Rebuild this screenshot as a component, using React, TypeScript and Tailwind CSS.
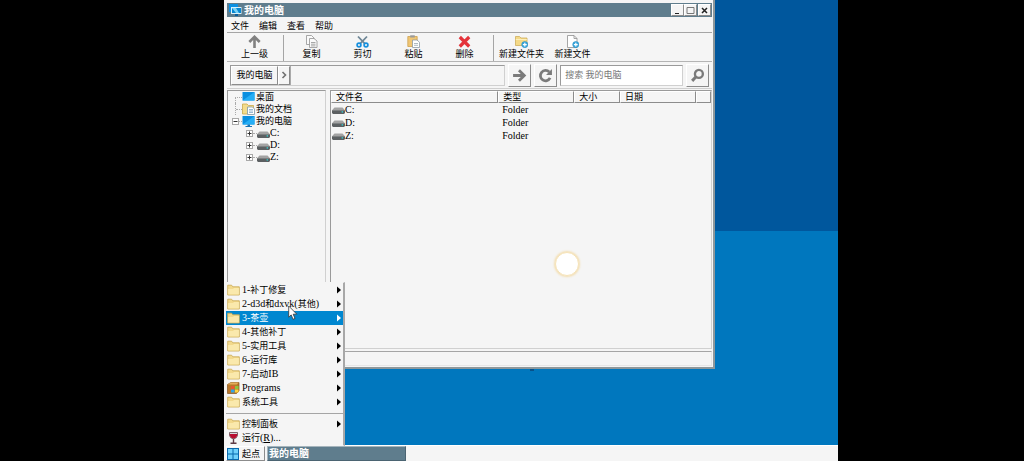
import { Fragment, type ReactNode } from "react";

const raised = "border border-t-white border-l-white border-r-[#8c8c8c] border-b-[#8c8c8c] bg-[#f5f5f5]";
const sunken = "border border-t-[#9a9a9a] border-l-[#9a9a9a] border-r-[#d0d0d0] border-b-[#d0d0d0]";

function Label({ text }: { text: string }) {
  const parts = text.split(/([\x20-\x7e]+)/).filter(Boolean);
  return (
    <span className="whitespace-pre">
      {parts.map((part, i) =>
        /^[\x20-\x7e]/.test(part) ? (
          <span key={i} className="text-[10px]">
            {part}
          </span>
        ) : (
          <Fragment key={i}>{part}</Fragment>
        ),
      )}
    </span>
  );
}

function MonitorIcon({ stand = false }: { stand?: boolean }) {
  return (
    <svg viewBox="0 0 13 12" className="h-3 w-[13px] shrink-0" aria-hidden="true">
      <path d="M0.5 1H12.5V9.5H0.5Z" fill="#0a8fe0" />
      <path d="M0.5 9.5L12.5 1V9.5Z" fill="#25aef5" />
      {stand && <path d="M5.5 9.5H8V11H10V12H3.5V11H5.5Z" fill="#1674b5" />}
    </svg>
  );
}

function DocsIcon() {
  return (
    <svg viewBox="0 0 13 12" className="h-3 w-[13px] shrink-0" aria-hidden="true">
      <path d="M0.5 1H5L6.5 2.5H11.5V11H0.5Z" fill="#f3dc8c" stroke="#c9a84c" strokeWidth="0.8" />
      <path d="M5.5 4H10.5L12.5 6V11.5H5.5Z" fill="#fff" stroke="#7f98a8" strokeWidth="0.8" />
      <path d="M7 6.5H11M7 8H11M7 9.5H11" stroke="#6d9cc0" strokeWidth="0.7" />
    </svg>
  );
}

function DriveIcon() {
  return (
    <svg viewBox="0 0 13 9" className="h-[9px] w-[13px] shrink-0" aria-hidden="true">
      <path d="M2.5 2.5H10.5L13 5.2H0Z" fill="#a3a3a3" />
      <path d="M0 5.2H13V8L12 9H1L0 8Z" fill="#5c6062" />
      <circle cx="10.3" cy="6.9" r="0.8" fill="#35c6c9" />
    </svg>
  );
}

function FolderIcon() {
  return (
    <svg viewBox="0 0 13 12" className="h-3 w-[13px] shrink-0" aria-hidden="true">
      <path d="M0.7 11V1.2H4.6L5.8 2.8H12.3V11Z" fill="#f2d98c" stroke="#c9a850" strokeWidth="0.8" />
      <path d="M1.1 5H6L7 4H11.9V10.6H1.1Z" fill="#fae9ac" />
    </svg>
  );
}

function ProgramsIcon() {
  return (
    <svg viewBox="0 0 13 12" className="h-3 w-[13px] shrink-0" aria-hidden="true">
      <path d="M0.5 2.5L4 0.5H12V9L9.5 11.5H0.5Z" fill="#b9772b" stroke="#80501f" strokeWidth="0.7" />
      <path d="M0.5 2.5L4 0.5H12L9.5 2.5Z" fill="#e3ad5b" />
      <path d="M4 4H7.5V7H4Z" fill="#e75835" />
      <path d="M8 4H11.5V7H8Z" fill="#8bc53f" />
      <path d="M4 7.5H7.5V10.5H4Z" fill="#2fa4e7" />
      <path d="M8 7.5H11.5V10.5H8Z" fill="#ffd23e" />
    </svg>
  );
}

function WineIcon() {
  return (
    <svg viewBox="0 0 13 12" className="h-3 w-[13px] shrink-0" aria-hidden="true">
      <path d="M2.5 0.5H10.5V3.5Q10 6.5 6.5 6.8Q3 6.5 2.5 3.5Z" fill="#d4dade" stroke="#65464d" strokeWidth="0.8" />
      <path d="M2.8 2H10.2V3.8Q9 6.4 6.5 6.6Q4 6.4 2.8 3.8Z" fill="#b80f31" />
      <path d="M6.5 6.8V10.5M3.5 11.2H9.5" stroke="#5e3943" strokeWidth="1.4" />
    </svg>
  );
}

function PlusBadge() {
  return (
    <>
      <circle cx="9.8" cy="9.6" r="3.1" fill="#3ba7dd" stroke="#2187bd" strokeWidth="0.5" />
      <path d="M9.8 7.7V11.5M7.9 9.6H11.7" stroke="#fff" strokeWidth="1.2" />
    </>
  );
}

const toolIcons: Record<string, ReactNode> = {
  up: <path d="M6.5 13V3M1.3 7L6.5 1.8L11.7 7" fill="none" stroke="#808080" strokeWidth="2.6" />,
  copy: (
    <g fill="#fafafa" stroke="#929292" strokeWidth="0.8">
      <path d="M1.5 0.5H6.5L9 3V9.5H1.5Z" />
      <path d="M4.5 3.5H9L12 6V12.5H4.5Z" />
      <path d="M6 7.5H10.5M6 9.2H10.5M6 10.9H10.5" />
    </g>
  ),
  cut: (
    <g fill="none">
      <path d="M2 1.5L9.3 9.2M11 1.5L3.7 9.2" stroke="#6f8796" strokeWidth="1.8" />
      <circle cx="3" cy="10" r="1.9" stroke="#168fdd" strokeWidth="1.7" />
      <circle cx="10" cy="10" r="1.9" stroke="#168fdd" strokeWidth="1.7" />
    </g>
  ),
  paste: (
    <g>
      <path d="M0.8 1.5H10.2V11.5H0.8Z" fill="#f0c673" stroke="#c99a44" strokeWidth="0.7" />
      <path d="M3.2 0.3H7.8V2.5H3.2Z" fill="#9a9a9a" />
      <path d="M5.5 5H10L12.5 7.3V12.5H5.5Z" fill="#fff" stroke="#8e9ba4" strokeWidth="0.8" />
      <path d="M7 8.5H11M7 10.3H11" stroke="#9aa8b0" strokeWidth="0.8" />
    </g>
  ),
  remove: <path d="M1.8 2L11.2 11.5M11.2 2L1.8 11.5" stroke="#e4333a" strokeWidth="3.2" />,
  newFolder: (
    <g>
      <path d="M0.5 1.5H4.5L6 3H12V10.5H0.5Z" fill="#f4d987" stroke="#c9a64f" strokeWidth="0.7" />
      <path d="M0.8 4.5H11.8" stroke="#fdf0bf" strokeWidth="0.9" />
      <PlusBadge />
    </g>
  ),
  newFile: (
    <g>
      <path d="M1.5 0.5H8L11 3.5V12.5H1.5Z" fill="#fff" stroke="#909090" strokeWidth="0.8" />
      <path d="M8 0.5V3.5H11" fill="none" stroke="#909090" strokeWidth="0.8" />
      <PlusBadge />
    </g>
  ),
};

function ToolButton({ icon, label }: { icon: string; label: string }) {
  return (
    <button type="button" className="flex w-[51px] flex-col items-center whitespace-nowrap">
      <svg viewBox="0 0 13 13" className="size-[13px]" aria-hidden="true">
        {toolIcons[icon]}
      </svg>
      <span className="leading-[13px]">{label}</span>
    </button>
  );
}

function Divider() {
  return <div className="ml-[3px] mr-[2px] w-px self-stretch bg-[#a5a5a5]" />;
}

function Expander({ open = false }: { open?: boolean }) {
  return (
    <button
      type="button"
      aria-label={open ? "折叠" : "展开"}
      className="grid size-[7px] shrink-0 place-items-center border border-[#a8a8a8] bg-white"
    >
      <svg viewBox="0 0 5 5" className="size-[5px]" aria-hidden="true">
        <path d="M0.5 2H4.5V3H0.5Z" fill="#333" />
        {!open && <path d="M2 0.5H3V4.5H2Z" fill="#333" />}
      </svg>
    </button>
  );
}

const drives = ["C:", "D:", "Z:"];

function Tree() {
  return (
    <nav aria-label="文件夹" className={`w-[99px] shrink-0 bg-[#f5f5f5] ${sunken}`}>
      <ul className="pl-1">
        <li className="flex h-3 items-center">
          <span className="ml-[3px] mt-[6px] h-[6px] w-[7px] border-l border-t border-dotted border-[#aaa]" />
          <MonitorIcon />
          <span className="pl-px">桌面</span>
        </li>
        <li className="flex h-3 items-center">
          <span className="ml-[3px] flex h-3 w-[7px] items-center border-l border-dotted border-[#aaa]">
            <span className="w-full border-t border-dotted border-[#aaa]" />
          </span>
          <DocsIcon />
          <span className="pl-px">我的文档</span>
        </li>
        <li>
          <div className="flex h-3 items-center">
            <Expander open />
            <span className="w-[3px] border-t border-dotted border-[#aaa]" />
            <MonitorIcon stand />
            <span className="pl-px">我的电脑</span>
          </div>
          <ul className="pl-[14px]">
            {drives.map((d) => (
              <li key={d} className="flex h-3 items-center">
                <Expander />
                <span className="w-1 border-t border-dotted border-[#aaa]" />
                <DriveIcon />
                <Label text={d} />
              </li>
            ))}
          </ul>
        </li>
      </ul>
    </nav>
  );
}

function FileList() {
  const th = `h-3 px-1 text-left font-normal leading-[10px] ${raised}`;
  return (
    <section className={`min-w-0 flex-1 bg-[#f5f5f5] ${sunken}`}>
      <table className="w-full table-fixed border-separate border-spacing-0">
        <thead>
          <tr>
            <th className={`w-[44%] ${th}`}>文件名</th>
            <th className={`w-[20%] ${th}`}>类型</th>
            <th className={`w-[12%] ${th}`}>大小</th>
            <th className={`w-[20%] ${th}`}>日期</th>
            <td className={th} />
          </tr>
        </thead>
        <tbody>
          {drives.map((d) => (
            <tr key={d} className="h-[13px]">
              <td className="p-0">
                <span className="flex h-[13px] items-center pl-px">
                  <DriveIcon />
                  <Label text={d} />
                </span>
              </td>
              <td className="px-1 py-0 text-[10px] leading-[13px]">Folder</td>
              <td />
              <td />
              <td />
            </tr>
          ))}
        </tbody>
      </table>
    </section>
  );
}

function CaptionButton({ label, children }: { label: string; children: ReactNode }) {
  return (
    <button type="button" aria-label={label} className={`grid h-3 w-[13px] place-items-center ${raised}`}>
      <svg viewBox="0 0 9 9" className="size-[9px]" fill="none" aria-hidden="true">
        {children}
      </svg>
    </button>
  );
}

function IconButton({ label, children }: { label: string; children: ReactNode }) {
  return (
    <button type="button" aria-label={label} className={`grid size-[23px] shrink-0 place-items-center ${raised}`}>
      <svg viewBox="0 0 14 14" className="size-[15px]" fill="none" stroke="#7b7b7b" strokeWidth="2.6" aria-hidden="true">
        {children}
      </svg>
    </button>
  );
}

function ExplorerWindow() {
  return (
    <main className="absolute left-0 top-0 flex h-4/5 w-4/5 flex-col border-b-2 border-r-2 border-[#8d979b] bg-[#f5f5f5] pb-px pl-[3px] pr-px pt-[3px]">
      <header className="flex h-[14px] shrink-0 items-center bg-[#5f7d8d] pl-[2px] pr-px text-white">
        <svg viewBox="0 0 13 12" className="h-3 w-[13px]" aria-hidden="true">
          <path d="M0 0H9V8H0Z" fill="#0c91e3" />
          <path d="M2 3H12.5V10H2Z" fill="#d9f1fb" />
          <path d="M3 4H12V9H3Z" fill="#0787d2" />
          <path d="M3 4H7L10 9H7Z" fill="#7bd3f6" />
          <path d="M6 10H9V12H6Z" fill="#075c9d" />
        </svg>
        <h1 className="flex-1 pl-[2px] pt-[2px] text-[10px] font-bold leading-[14px]">我的电脑</h1>
        <div className="flex">
          <CaptionButton label="最小化">
            <path d="M2 7.5H6" stroke="#222" />
          </CaptionButton>
          <CaptionButton label="最大化">
            <path d="M1 1.5H8V7.5H1Z" stroke="#777" />
          </CaptionButton>
          <span className="w-px" />
          <CaptionButton label="关闭">
            <path d="M2 2L7 7M7 2L2 7" stroke="#222" strokeWidth="1.5" />
          </CaptionButton>
        </div>
      </header>

      <nav className="flex h-4 shrink-0 items-center gap-[10px] border-b border-[#a5a5a5] pl-1 pt-[2px]">
        {["文件", "编辑", "查看", "帮助"].map((m) => (
          <button key={m} type="button">
            {m}
          </button>
        ))}
      </nav>

      <div className="flex h-[29px] shrink-0 items-center border-b border-[#b4b4b4] pl-[2px] pt-[2px]">
        <ToolButton icon="up" label="上一级" />
        <Divider />
        <ToolButton icon="copy" label="复制" />
        <ToolButton icon="cut" label="剪切" />
        <ToolButton icon="paste" label="粘贴" />
        <ToolButton icon="remove" label="删除" />
        <Divider />
        <ToolButton icon="newFolder" label="新建文件夹" />
        <ToolButton icon="newFile" label="新建文件" />
      </div>

      <form className="flex h-[27px] shrink-0 items-center border-b border-[#cfcfcf] pl-[3px] pr-[3px]" onSubmit={(e) => e.preventDefault()}>
        <div className={`flex h-[21px] min-w-0 flex-1 ${sunken}`}>
          <button type="button" className={`w-[47px] shadow-[1px_0_0_#aaa] ${raised}`}>
            我的电脑
          </button>
          <button type="button" aria-label="展开路径" className={`grid w-[12px] place-items-center shadow-[1px_0_0_#aaa] ${raised}`}>
            <svg viewBox="0 0 6 8" className="h-2 w-[6px]" aria-hidden="true">
              <path d="M1.5 1L4.5 4L1.5 7" fill="none" stroke="#707070" strokeWidth="1.6" />
            </svg>
          </button>
        </div>
        <div className="flex gap-[3px] px-[3px]">
          <IconButton label="转到">
            <path d="M1 7H11M6.5 2L11.5 7L6.5 12" />
          </IconButton>
          <IconButton label="刷新">
            <path d="M11.3 9.3A4.8 4.8 0 1 1 10.5 3.8" />
            <path d="M13 1V6.5H7.5Z" fill="#7b7b7b" stroke="none" />
          </IconButton>
        </div>
        <input
          type="search"
          aria-label="搜索"
          placeholder="搜索 我的电脑"
          className={`h-[21px] w-[123px] bg-white px-1 placeholder:text-[#777] ${sunken}`}
        />
        <div className="pl-[3px]">
          <IconButton label="开始搜索">
            <circle cx="8.3" cy="5.5" r="3.7" strokeWidth="2.2" />
            <path d="M5.6 8.2L2 12" strokeWidth="2.8" />
          </IconButton>
        </div>
      </form>

      <div className="flex min-h-0 flex-1 gap-1 pt-px">
        <Tree />
        <FileList />
      </div>

      <footer className="mt-[2px] h-[15px] shrink-0 border border-[#e6e6e6] border-t-[#a5a5a5]" />
    </main>
  );
}

const menuItems = ["1-补丁修复", "2-d3d和dxvk(其他)", "3-茶壶", "4-其他补丁", "5-实用工具", "6-运行库", "7-启动IB", "Programs", "系统工具"];

function MenuItem({ text, icon, active = false, submenu = true }: { text: string; icon: ReactNode; active?: boolean; submenu?: boolean }) {
  return (
    <li>
      <button
        type="button"
        className={`flex h-[14px] w-full items-center pl-px pr-[2px] text-left ${active ? "bg-[#0087d0] text-white" : ""}`}
      >
        {icon}
        <span className="flex-1 pl-[2px]">
          <Label text={text} />
        </span>
        {submenu && (
          <svg viewBox="0 0 4 8" className="h-2 w-1" aria-hidden="true">
            <path d="M0 0.5L4 4L0 7.5Z" fill="currentColor" />
          </svg>
        )}
      </button>
    </li>
  );
}

function StartMenu() {
  return (
    <ul className="absolute bottom-full left-0 w-[121px] border border-l-2 border-r-2 border-[#f5f5f5] border-r-[#a8a8a8] bg-[#f5f5f5]">
      {menuItems.map((text) => (
        <MenuItem key={text} text={text} active={text === "3-茶壶"} icon={text === "Programs" ? <ProgramsIcon /> : <FolderIcon />} />
      ))}
      <li role="separator" className="mb-[3px] mt-1 border-t border-[#a5a5a5]" />
      <MenuItem text="控制面板" icon={<FolderIcon />} />
      <li>
        <button type="button" className="flex h-[14px] w-full items-center pl-px text-left">
          <WineIcon />
          <span className="pl-[2px]">
            运行
            <span className="text-[10px]">
              (<u>R</u>)...
            </span>
          </span>
        </button>
      </li>
    </ul>
  );
}

export default function App() {
  return (
    <div className="h-screen overflow-hidden bg-black pl-[224px] pr-[186px] font-['Liberation_Serif','Noto_Sans_CJK_SC',serif] text-[9px] leading-3 text-black">
      <div className="relative flex h-full flex-col">
        <div className="flex-1 bg-[#0077be]">
          <div className="h-[52%] bg-[#00579d]" />
        </div>
        <ExplorerWindow />
        <div className="absolute left-[331px] top-[252px] size-6 rounded-full border border-[#f6e3b8] bg-white shadow-[0_0_2px_1px_#f3dfb4]" />
        <div className="absolute left-[306px] top-[369px] h-[2px] w-1 bg-[#07518a]" />
        <footer className="relative flex h-4 shrink-0 gap-[2px] border-t border-white bg-[#f5f5f5] pl-[2px]">
          <StartMenu />
          <button type="button" className={`flex w-[39px] items-center gap-[3px] ${raised}`}>
            <svg viewBox="0 0 12 12" className="size-3" aria-hidden="true">
              <path d="M0 0H12V12H0Z" fill="#0868ad" />
              <path d="M1 1H5.5V5.5H1ZM6.5 1H11V5.5H6.5ZM1 6.5H5.5V11H1ZM6.5 6.5H11V11H6.5Z" fill="#6fd0fa" />
            </svg>
            <span>起点</span>
          </button>
          <button type="button" className="w-[139px] border border-b-[#4b6472] border-l-[#a5b4bc] border-r-[#4b6472] border-t-[#a5b4bc] bg-[#5f7d8d] pl-px text-left text-[10px] font-bold text-white">
            我的电脑
          </button>
        </footer>
        <svg viewBox="0 0 10 16" className="pointer-events-none absolute left-[64px] top-[305px] h-4 w-[10px]" aria-hidden="true">
          <path d="M0.7 1V12.2L3.2 9.9L5 14.3L7 13.4L5.2 9.2H8.8Z" fill="#fff" stroke="#333" strokeWidth="0.8" />
        </svg>
      </div>
    </div>
  );
}
